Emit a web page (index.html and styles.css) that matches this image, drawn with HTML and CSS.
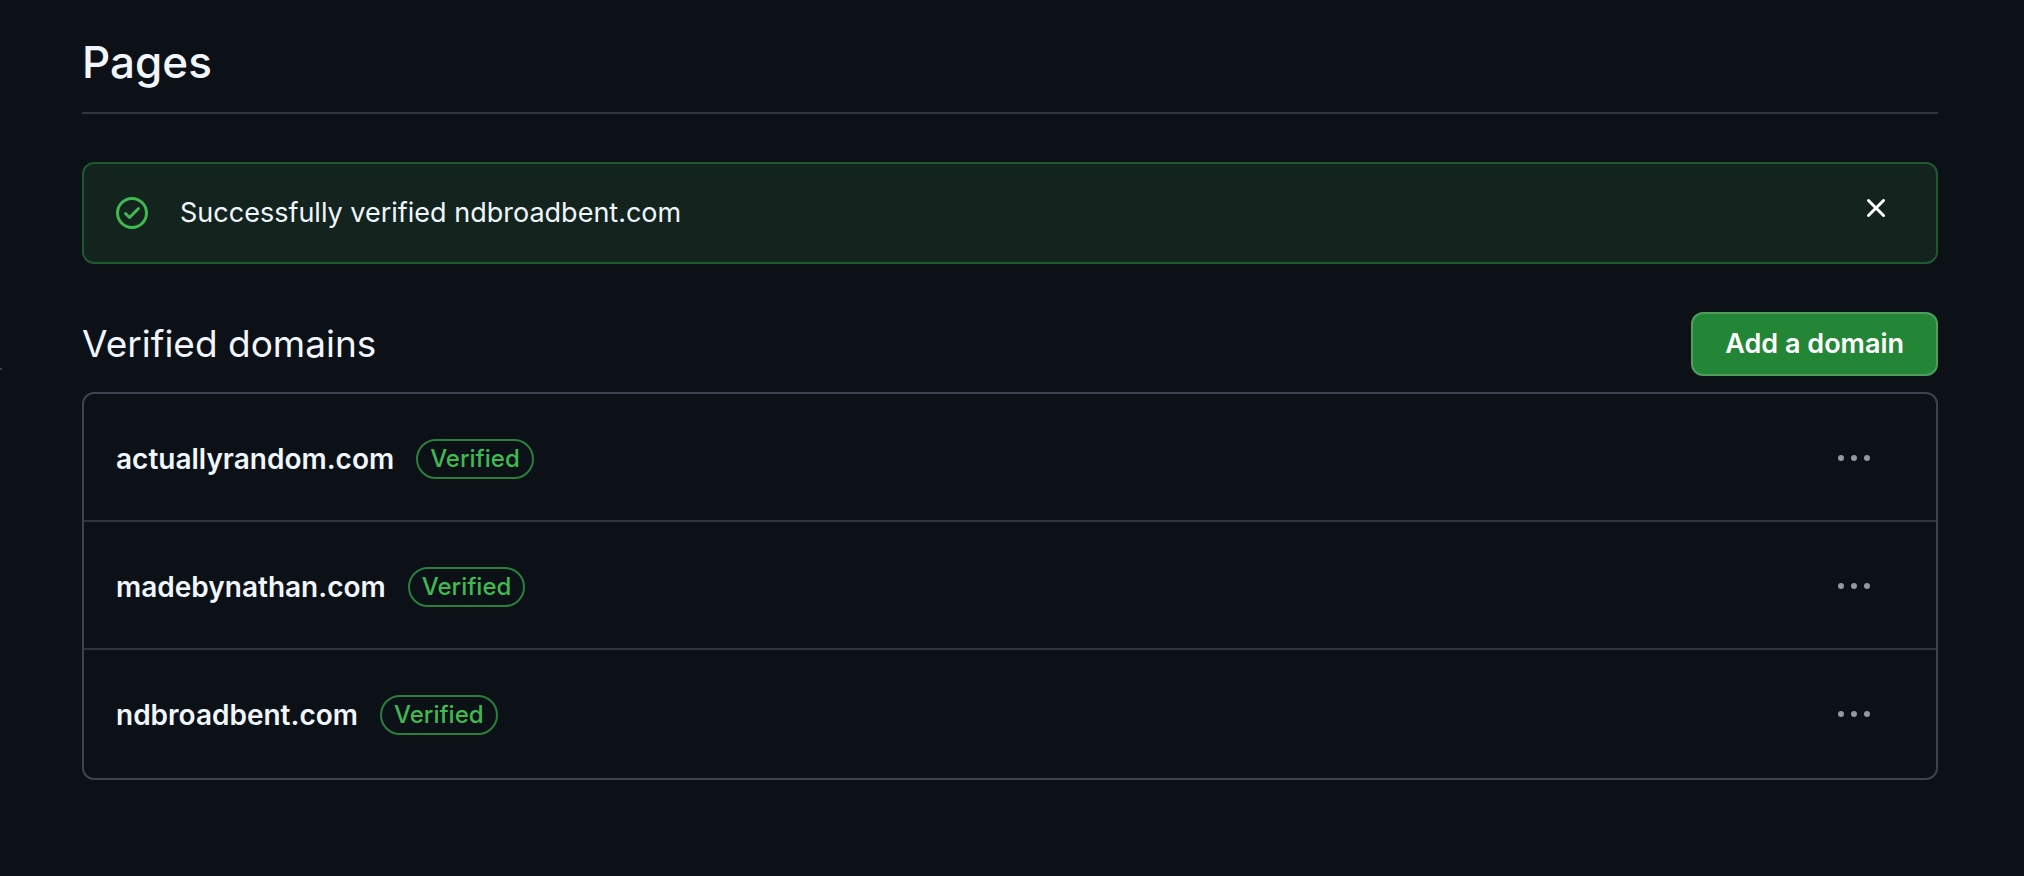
FILE: index.html
```html
<!DOCTYPE html>
<html lang="en">
<head>
  <meta charset="utf-8">
  <title>Pages</title>
  <link rel="stylesheet" href="styles.css">
</head>
<body>
  <span class="side-rule"></span>
  <main class="settings">
    <h1 class="page-title">Pages</h1>

    <div class="flash" role="status">
      <svg class="icon flash-icon" viewBox="0 0 16 16"><path d="M0 8a8 8 0 1 1 16 0A8 8 0 0 1 0 8Zm1.5 0a6.5 6.5 0 1 0 13 0 6.5 6.5 0 0 0-13 0Zm10.28-1.72-4.5 4.5a.75.75 0 0 1-1.06 0l-2-2a.751.751 0 0 1 .018-1.042.751.751 0 0 1 1.042-.018l1.47 1.47 3.97-3.97a.751.751 0 0 1 1.042.018.751.751 0 0 1 .018 1.042Z"/></svg>
      <p class="flash-text">Successfully verified ndbroadbent.com</p>
      <button class="flash-close" type="button" aria-label="Dismiss this message">
        <svg class="icon" viewBox="0 0 16 16"><path d="M3.72 3.72a.75.75 0 0 1 1.06 0L8 6.94l3.22-3.22a.749.749 0 0 1 1.275.326.749.749 0 0 1-.215.734L9.06 8l3.22 3.22a.749.749 0 0 1-.326 1.275.749.749 0 0 1-.734-.215L8 9.06l-3.22 3.22a.751.751 0 0 1-1.042-.018.751.751 0 0 1-.018-1.042L6.94 8 3.72 4.78a.75.75 0 0 1 0-1.06Z"/></svg>
      </button>
    </div>

    <div class="subhead">
      <h2 class="subhead-title">Verified domains</h2>
      <button class="btn-primary" type="button">Add a domain</button>
    </div>

    <ul class="domains">
      <li class="domain">
        <strong class="domain-name">actuallyrandom.com</strong>
        <span class="label">Verified</span>
        <button class="menu-btn" type="button" aria-label="Options for actuallyrandom.com">
          <svg class="icon" viewBox="0 0 16 16"><path d="M8 9a1.5 1.5 0 1 0 0-3 1.5 1.5 0 0 0 0 3ZM1.5 9a1.5 1.5 0 1 0 0-3 1.5 1.5 0 0 0 0 3Zm13 0a1.5 1.5 0 1 0 0-3 1.5 1.5 0 0 0 0 3Z"/></svg>
        </button>
      </li>
      <li class="domain">
        <strong class="domain-name">madebynathan.com</strong>
        <span class="label">Verified</span>
        <button class="menu-btn" type="button" aria-label="Options for madebynathan.com">
          <svg class="icon" viewBox="0 0 16 16"><path d="M8 9a1.5 1.5 0 1 0 0-3 1.5 1.5 0 0 0 0 3ZM1.5 9a1.5 1.5 0 1 0 0-3 1.5 1.5 0 0 0 0 3Zm13 0a1.5 1.5 0 1 0 0-3 1.5 1.5 0 0 0 0 3Z"/></svg>
        </button>
      </li>
      <li class="domain">
        <strong class="domain-name">ndbroadbent.com</strong>
        <span class="label">Verified</span>
        <button class="menu-btn" type="button" aria-label="Options for ndbroadbent.com">
          <svg class="icon" viewBox="0 0 16 16"><path d="M8 9a1.5 1.5 0 1 0 0-3 1.5 1.5 0 0 0 0 3ZM1.5 9a1.5 1.5 0 1 0 0-3 1.5 1.5 0 0 0 0 3Zm13 0a1.5 1.5 0 1 0 0-3 1.5 1.5 0 0 0 0 3Z"/></svg>
        </button>
      </li>
    </ul>
  </main>
</body>
</html>
```
FILE: styles.css
```css
* {
  box-sizing: border-box;
}

body {
  margin: 0;
  background-color: #0c1017;
  color: #f0f6fc;
  font-family: Inter, "Liberation Sans", sans-serif;
  font-size: 27px;
  line-height: 42px;
}

/* end of the sidebar divider */
.side-rule {
  position: absolute;
  top: 368px;
  left: 0;
  width: 2px;
  height: 2px;
  background-color: #3d444d;
}

.settings {
  padding: 26px 86px 96px 82px;
}

.icon {
  display: block;
  width: 32px;
  height: 32px;
  fill: currentColor;
}

button {
  font: inherit;
  cursor: pointer;
}

.page-title {
  margin: 0 0 48px;
  padding-bottom: 14px;
  border-bottom: 2px solid #2f353d;
  font-size: 44px;
  font-weight: 500;
  line-height: 72px;
}

.flash {
  display: flex;
  align-items: center;
  padding: 28px 44px 28px 32px;
  background-color: #13241f;
  border: 2px solid #205830;
  border-radius: 12px;
}
.flash-icon {
  color: #3fb950;
}
.flash-text {
  flex: 1;
  margin: 0 0 0 32px;
}
.flash-close {
  align-self: flex-start;
  padding: 0;
  background: none;
  border: none;
  color: #fff;
}

.subhead {
  display: flex;
  align-items: center;
  justify-content: space-between;
  margin: 48px 0 16px;
}
.subhead-title {
  margin: 0;
  font-size: 37px;
  font-weight: 400;
  line-height: 60px;
}

.btn-primary {
  padding: 9px 32px;
  background-color: #238636;
  border: 2px solid #4f9e5e;
  border-radius: 12px;
  color: #fff;
  font-weight: 600;
}

.domains {
  margin: 0;
  padding: 0;
  list-style: none;
  border: 2px solid #3d444d;
  border-radius: 12px;
}
.domain {
  display: flex;
  align-items: center;
  padding: 44px 32px 40px;
  border-bottom: 2px solid #2f353d;
}
.domain:last-child {
  border-bottom-color: transparent;
}
.domain-name {
  font-size: 28px;
  font-weight: 600;
}

.label {
  margin-left: 22px;
  padding: 0 12px;
  border: 2px solid #2a7f3b;
  border-radius: 20px;
  color: #3fb950;
  font-size: 24px;
  font-weight: 500;
  line-height: 36px;
}

.menu-btn {
  margin-left: auto;
  padding: 0 34px;
  background: none;
  border: none;
  color: #9198a1;
}
```
